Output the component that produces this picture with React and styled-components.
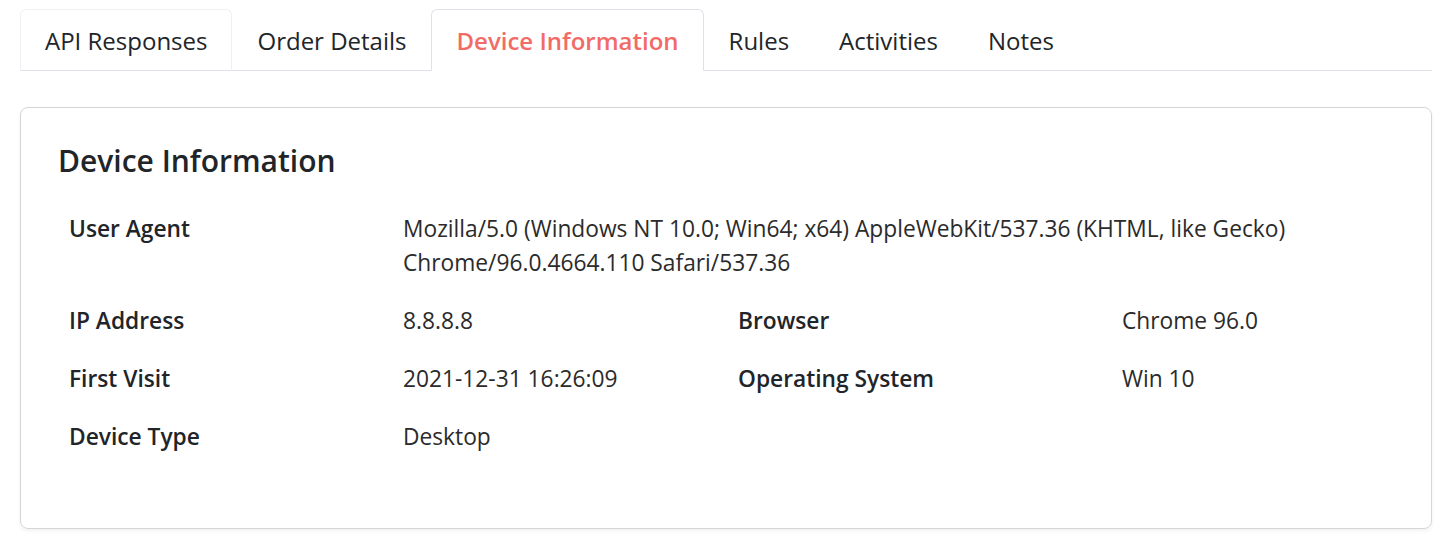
import React, { useState } from 'react'
import styled, { createGlobalStyle } from 'styled-components'

const GlobalStyle = createGlobalStyle`
  body {
    margin: 0;
    background: #fff;
    font-family: "Open Sans", "Noto Sans", sans-serif;
    color: #212529;
  }
`

const Page = styled.div`
  padding: 9px 18px 20px 20px;
`

const TabBar = styled.div`
  display: flex;
  border-bottom: 1px solid #dee2e6;
  margin-bottom: 36px;
`

const Tab = styled.button`
  font-family: inherit;
  font-size: 24px;
  font-weight: ${({ $active }) => ($active ? 600 : 400)};
  height: 62px;
  padding: 0 24px;
  margin-bottom: -1px;
  background: ${({ $active }) => ($active ? '#fff' : 'transparent')};
  cursor: pointer;
  border: 1px solid ${({ $active, $soft }) => ($active ? '#dee2e6' : $soft ? '#eef0f4' : 'transparent')};
  border-bottom-color: ${({ $active }) => ($active ? '#fff' : 'transparent')};
  border-radius: 6px 6px 0 0;
  color: ${({ $active }) => ($active ? '#f26b66' : '#212529')};
`

const Card = styled.div`
  border: 1px solid #d6d6d6;
  border-radius: 8px;
  box-shadow: 0 2px 4px rgba(0, 0, 0, 0.06);
  padding: 35px 37px 62px;
`

const Title = styled.h2`
  margin: 0 0 21px;
  font-size: 30px;
  font-weight: 600;
  line-height: 36px;
`

const InfoGrid = styled.div`
  display: grid;
  grid-template-columns: 334px 335px 384px 1fr;
`

const Label = styled.div`
  padding: 12px 11px;
  font-size: 22.75px;
  line-height: 34px;
  font-weight: 600;
  color: #212529;
`

const Value = styled.div`
  padding: 12px 11px;
  font-size: 22.75px;
  line-height: 34px;
  color: #2b2b2b;
  grid-column: ${({ $span }) => ($span ? `span ${$span}` : 'auto')};
`

const tabs = ['API Responses', 'Order Details', 'Device Information', 'Rules', 'Activities', 'Notes']

const rows = [
  [['User Agent', 'Mozilla/5.0 (Windows NT 10.0; Win64; x64) AppleWebKit/537.36 (KHTML, like Gecko) Chrome/96.0.4664.110 Safari/537.36', 3]],
  [['IP Address', '8.8.8.8'], ['Browser', 'Chrome 96.0']],
  [['First Visit', '2021-12-31 16:26:09'], ['Operating System', 'Win 10']],
  [['Device Type', 'Desktop', 3]],
]

const App = () => {
  const [active, setActive] = useState('Device Information')
  return (
    <Page>
      <GlobalStyle />
      <TabBar>
        {tabs.map((t, i) => (
          <Tab key={t} $active={t === active} $soft={i === 0} onClick={() => setActive(t)}>
            {t}
          </Tab>
        ))}
      </TabBar>
      <Card>
        <Title>Device Information</Title>
        <InfoGrid>
          {rows.map((row) =>
            row.map(([label, value, span]) => (
              <React.Fragment key={label}>
                <Label>{label}</Label>
                <Value $span={span}>{value}</Value>
              </React.Fragment>
            ))
          )}
        </InfoGrid>
      </Card>
    </Page>
  )
}

export default App
